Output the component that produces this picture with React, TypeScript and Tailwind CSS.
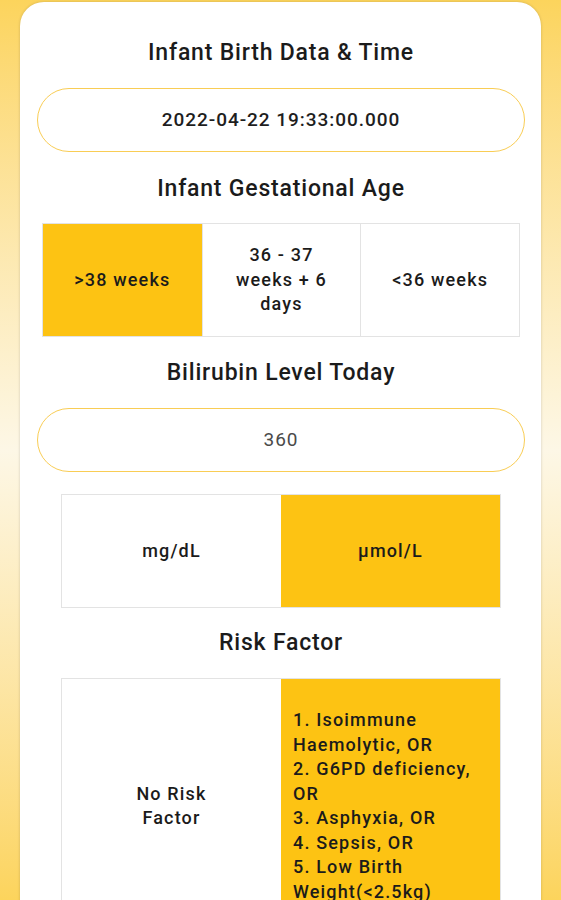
import { useState } from "react";

const font = { fontFamily: "Roboto, 'Noto Sans', sans-serif" };

function Title({ text, className = "" }: { text: string; className?: string }) {
  return (
    <h2
      className={`text-center text-[23px] leading-[28px] tracking-[0.035em] font-medium text-[#1b1b1b] ${className}`}
    >
      {text}
    </h2>
  );
}

function Pill({ value, muted = false, className = "" }: { value: string; muted?: boolean; className?: string }) {
  return (
    <div
      className={`h-[64px] rounded-full border-[1.5px] border-[#f9cd55] flex items-center justify-center text-[19px] tracking-[0.05em] ${
        muted ? "text-[#4a4a4a]" : "text-[#1e1e1e] font-medium"
      } ${className}`}
    >
      {value}
    </div>
  );
}

export default function App() {
  const [age, setAge] = useState(0);
  const [unit, setUnit] = useState(1);
  const [risk, setRisk] = useState(1);

  const ages = [
    [">38 weeks"],
    ["36 - 37", "weeks + 6", "days"],
    ["<36 weeks"],
  ];
  const units = ["mg/dL", "µmol/L"];
  const riskLines = [
    "1. Isoimmune",
    "Haemolytic, OR",
    "2. G6PD deficiency,",
    "OR",
    "3. Asphyxia, OR",
    "4. Sepsis, OR",
    "5. Low Birth",
    "Weight(<2.5kg)",
  ];

  const cellText = "text-[18px] leading-[24.5px] tracking-[0.065em] font-medium text-[#1b1b1b]";

  return (
    <div
      style={font}
      className="h-[900px] overflow-hidden bg-gradient-to-b from-[#fcd45c] via-[#fdf7e6] to-[#fcd45c]"
    >
      <div className="mx-[20px] mt-[2px] rounded-t-[24px] bg-white pl-[17px] pr-[16px] pt-[37px] pb-10 shadow-[0_0_3px_rgba(0,0,0,0.18)]">
        <Title text="Infant Birth Data & Time" />
        <Pill value="2022-04-22 19:33:00.000" className="mt-[21px]" />

        <Title text="Infant Gestational Age" className="mt-[23px]" />
        <div className="mt-[20px] ml-[5px] mr-[5px] grid grid-cols-3 border border-[#e3e3e3]">
          {ages.map((lines, i) => (
            <button
              key={i}
              onClick={() => setAge(i)}
              className={`h-[112px] flex flex-col items-center justify-center ${cellText} ${
                i > 0 ? "border-l border-[#e3e3e3]" : ""
              } ${age === i ? "bg-[#fdc313]" : "bg-white"}`}
            >
              {lines.map((l) => (
                <span key={l}>{l}</span>
              ))}
            </button>
          ))}
        </div>

        <Title text="Bilirubin Level Today" className="mt-[22px]" />
        <Pill value="360" muted className="mt-[21px]" />

        <div className="mt-[22px] mx-[24px] grid grid-cols-2 border border-[#e3e3e3]">
          {units.map((u, i) => (
            <button
              key={u}
              onClick={() => setUnit(i)}
              className={`h-[112px] flex items-center justify-center ${cellText} ${
                unit === i ? "bg-[#fdc313]" : "bg-white"
              }`}
            >
              {u}
            </button>
          ))}
        </div>

        <Title text="Risk Factor" className="mt-[21px]" />
        <div className="mt-[21px] mx-[24px] grid grid-cols-2 border border-[#e3e3e3]">
          <button
            onClick={() => setRisk(0)}
            className={`flex flex-col items-center justify-center ${cellText} ${
              risk === 0 ? "bg-[#fdc313]" : "bg-white"
            }`}
          >
            <span>No Risk</span>
            <span>Factor</span>
          </button>
          <button
            onClick={() => setRisk(1)}
            className={`flex flex-col items-start justify-center py-[29px] px-[12px] text-left ${cellText} ${
              risk === 1 ? "bg-[#fdc313]" : "bg-white"
            }`}
          >
            {riskLines.map((l) => (
              <span key={l}>{l}</span>
            ))}
          </button>
        </div>
      </div>
    </div>
  );
}
